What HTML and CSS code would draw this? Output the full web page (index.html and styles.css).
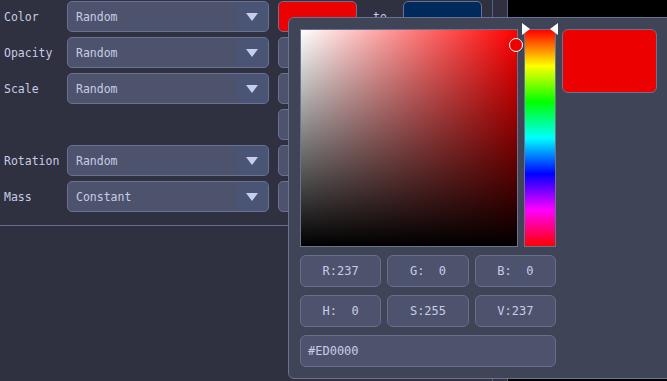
FILE: index.html
```html
<!DOCTYPE html>
<html lang="en">
<head>
    <meta charset="UTF-8">
    <meta name="viewport" content="width=device-width, initial-scale=1.0">
    <title>Particle Emitter</title>
    <link rel="stylesheet" href="styles.css">
</head>
<body>
    <div class="app">
        <div class="panel">
            <div class="rows">
                <div class="row">
                    <span class="label">Color</span>
                    <div class="select">Random<span class="arrow"></span></div>
                    <div class="swatch red"></div>
                    <span class="to">to</span>
                    <div class="swatch blue"></div>
                </div>
                <div class="row">
                    <span class="label">Opacity</span>
                    <div class="select">Random<span class="arrow"></span></div>
                    <div class="swatch"></div>
                </div>
                <div class="row">
                    <span class="label">Scale</span>
                    <div class="select">Random<span class="arrow"></span></div>
                    <div class="swatch"></div>
                </div>
                <div class="row">
                    <span class="label"></span>
                    <div class="select empty"></div>
                    <div class="swatch"></div>
                </div>
                <div class="row">
                    <span class="label">Rotation</span>
                    <div class="select">Random<span class="arrow"></span></div>
                    <div class="swatch"></div>
                </div>
                <div class="row">
                    <span class="label">Mass</span>
                    <div class="select">Constant<span class="arrow"></span></div>
                    <div class="swatch"></div>
                </div>
            </div>
            <div class="divider"></div>
        </div>
        <div class="strip"></div>
        <div class="viewport"></div>
    </div>

    <!-- color picker popup -->
    <div class="picker">
        <div class="picker-top">
            <div class="sv">
                <span class="sv-cursor"></span>
            </div>
            <div class="hue">
                <span class="hue-mark left"></span>
                <span class="hue-mark right"></span>
            </div>
            <div class="preview"></div>
        </div>
        <div class="fields">
            <div class="field">R:237</div>
            <div class="field">G:  0</div>
            <div class="field">B:  0</div>
            <div class="field">H:  0</div>
            <div class="field">S:255</div>
            <div class="field">V:237</div>
        </div>
        <div class="hex">#ED0000</div>
    </div>
</body>
</html>
```

FILE: styles.css
```css
html, body {
    margin: 0;
    padding: 0;
    height: 100%;
    overflow: hidden;
}
body {
    font-family: "DejaVu Sans Mono", "Liberation Mono", monospace;
    font-size: 11.5px;
    color: #c8cce6;
    background-color: #2f3040;
    position: relative;
}
.app {
    display: flex;
    height: 100%;
}
.panel {
    width: 493px;
    border-right: 1px solid #5d6380;
    box-sizing: border-box;
}
.rows {
    display: flex;
    flex-direction: column;
    gap: 5px;
    padding-top: 1px;
}
.row {
    display: flex;
    align-items: center;
    height: 31px;
}
.label {
    width: 63px;
    padding-left: 4px;
    padding-top: 1px;
}
.select {
    position: relative;
    width: 202px;
    height: 31px;
    box-sizing: border-box;
    border: 1px solid #6a7192;
    border-radius: 5px;
    background: linear-gradient(to right, #4e536d 0, #4e536d 169px, #4a5475 169px);
    padding-left: 8px;
    line-height: 30px;
}
.select.empty {
    visibility: hidden;
}
.arrow {
    position: absolute;
    right: 10px;
    top: 11px;
    width: 0;
    height: 0;
    border-left: 6px solid transparent;
    border-right: 6px solid transparent;
    border-top: 8px solid #c9cdec;
}
.swatch {
    width: 79px;
    height: 31px;
    margin-left: 9px;
    box-sizing: border-box;
    border: 1px solid #6a7192;
    border-radius: 5px;
    background-color: #4e536d;
}
.swatch.red {
    background-color: #ed0000;
}
.swatch.blue {
    margin-left: 0;
    width: 79px;
    background-color: #002a5c;
}
.to {
    width: 46px;
    text-align: center;
}
.divider {
    margin-top: 13px;
    border-top: 1px solid #656b8a;
}
.strip {
    width: 14px;
    border-right: 1px solid #5d6380;
}
.viewport {
    flex: 1;
    background-color: #000;
}

/* picker */
.picker {
    position: absolute;
    left: 288px;
    top: 17px;
    width: 390px;
    height: 362px;
    box-sizing: border-box;
    padding: 11px 11px;
    background-color: #3f4457;
    border: 1px solid #6a7294;
    border-radius: 6px;
}
.picker-top {
    display: flex;
    gap: 6px;
    height: 218px;
}
.sv {
    position: relative;
    width: 218px;
    height: 218px;
    box-sizing: border-box;
    border: 1px solid #6a7294;
    background:
        linear-gradient(to top, #000, rgba(0,0,0,0)),
        linear-gradient(to right, #fff, #f00);
}
.sv-cursor {
    position: absolute;
    left: 208px;
    top: 8px;
    width: 12px;
    height: 12px;
    border: 1px solid #fff;
    border-radius: 50%;
    background-color: #ed0000;
}
.hue {
    position: relative;
    width: 32px;
    height: 218px;
    box-sizing: border-box;
    border: 1px solid #6a7294;
    background: linear-gradient(to bottom, #f00, #ff0, #0f0, #0ff, #00f, #f0f, #f00);
}
.hue-mark {
    position: absolute;
    top: -7px;
    width: 0;
    height: 0;
    border-top: 6px solid transparent;
    border-bottom: 6px solid transparent;
}
.hue-mark.left {
    left: -3px;
    border-left: 8px solid #fff;
}
.hue-mark.right {
    right: -3px;
    border-right: 8px solid #fff;
}
.preview {
    width: 95px;
    height: 64px;
    box-sizing: border-box;
    border: 1px solid #6a7294;
    border-radius: 6px;
    background-color: #ed0000;
}
.fields {
    display: grid;
    grid-template-columns: repeat(3, 1fr);
    width: 256px;
    gap: 8px 6px;
    margin-top: 8px;
}
.field, .hex {
    height: 32px;
    box-sizing: border-box;
    border: 1px solid #676e8e;
    border-radius: 6px;
    background-color: #4e536d;
    font-size: 12px;
    line-height: 30px;
    white-space: pre;
}
.field {
    text-align: center;
}
.hex {
    width: 256px;
    margin-top: 8px;
    padding-left: 7px;
}
```
